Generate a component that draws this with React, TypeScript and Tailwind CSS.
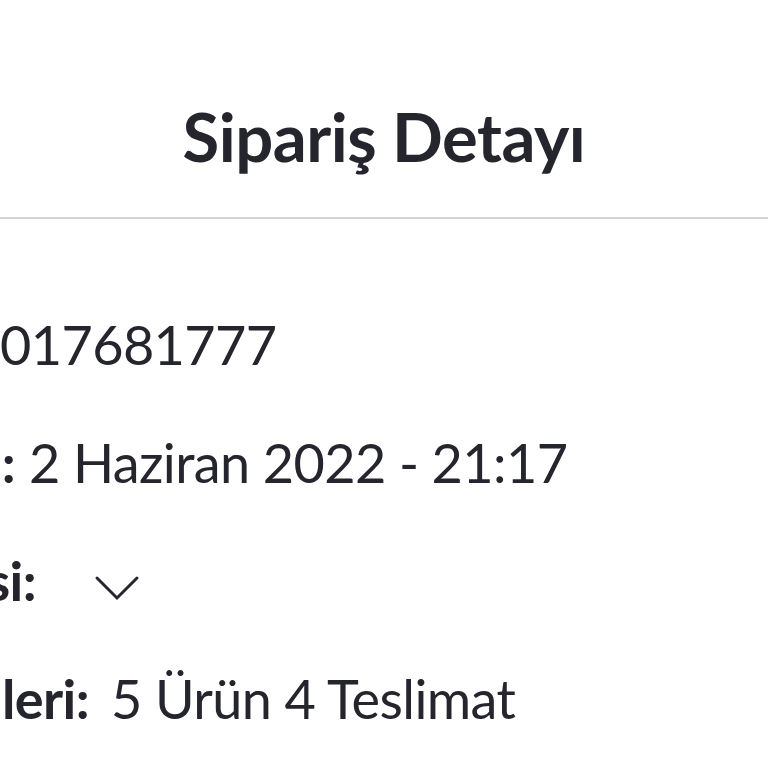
type Row = { label: string; labelEnd: number; value?: string; gap: number };

const rows: Row[] = [
  { label: "Sipariş No:", labelEnd: 0, value: "017681777", gap: 0 },
  { label: "Sipariş Tarihi:", labelEnd: 15, value: "2 Haziran 2022 - 21:17", gap: 14 },
  { label: "Teslimat Adresi:", labelEnd: 36, gap: 58 },
  { label: "Sipariş Bilgileri:", labelEnd: 89, value: "5 Ürün 4 Teslimat", gap: 22 },
];

function Chevron({ className }: { className?: string }) {
  return (
    <svg viewBox="0 0 46 26" className={className} fill="none" stroke="currentColor" strokeWidth={3}>
      <polyline points="3,3 23,23 43,3" strokeLinecap="round" />
    </svg>
  );
}

function DetailRow({ label, labelEnd, value, gap }: Row) {
  return (
    <div className="flex h-[118px] items-center whitespace-nowrap">
      {/* label is wider than the visible area, keep its end pinned */}
      <div className="flex shrink-0 justify-end overflow-hidden" style={{ width: labelEnd }}>
        <span className="font-bold">{label}</span>
      </div>
      <div className="flex items-center" style={{ marginLeft: gap }}>
        {value ? <span>{value}</span> : <Chevron className="mt-[14px] h-[26px] w-[46px]" />}
      </div>
    </div>
  );
}

export default function App() {
  return (
    <div
      className="min-h-[768px] overflow-hidden bg-white text-[#25252d]"
      style={{ fontFamily: "Lato, 'Noto Sans', sans-serif" }}
    >
      <header className="flex h-[219px] items-start justify-center border-b-2 border-[#d4d4d6] pt-[103px]">
        <h1 className="text-[67px] font-bold leading-none tracking-[-0.5px]">Sipariş Detayı</h1>
      </header>
      <div className="pt-[67px] text-[54px] leading-none tracking-[-0.6px]">
        {rows.map((r) => (
          <DetailRow key={r.label} {...r} />
        ))}
      </div>
    </div>
  );
}
